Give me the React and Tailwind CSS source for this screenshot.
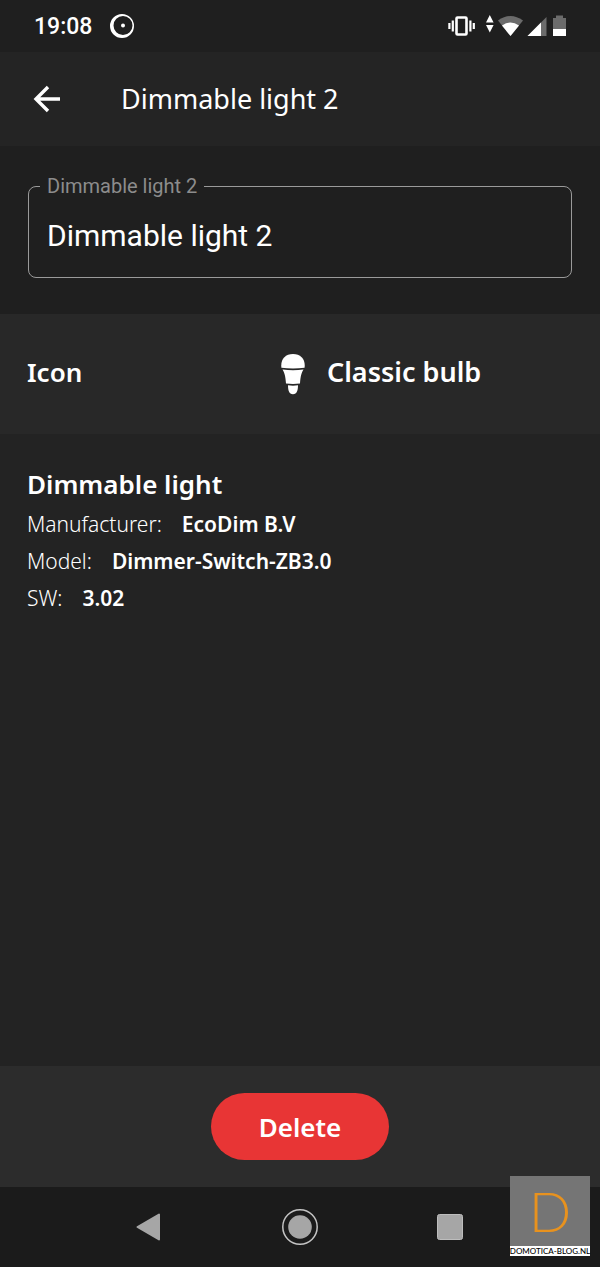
import React from 'react';

const details = [
  { label: 'Manufacturer:', value: 'EcoDim B.V' },
  { label: 'Model:', value: 'Dimmer-Switch-ZB3.0' },
  { label: 'SW:', value: '3.02' },
];

const StatusBar = () => (
  <div className="flex h-[52px] items-center justify-between bg-[#1f1f1f] pr-8 pl-[34px] font-['Roboto',sans-serif]">
    <div className="flex items-center gap-[18px]">
      <span className="pt-[2px] text-[23px] leading-8 font-medium">19:08</span>
      <svg className="size-6" viewBox="0 0 24 24">
        <path
          fill="#fff"
          fillRule="evenodd"
          d="M12 0a12 12 0 1 0 0 24a12 12 0 0 0 0-24ZM13 2a9.500 9.500 0 1 1 0 19a9.500 9.500 0 0 1 0-19Z"
        />
        <circle cx="13" cy="11.500" r="2" fill="#fff" />
      </svg>
    </div>

    <svg className="h-6 w-[120px]" viewBox="0 0 120 24">
      {/* Vibrate */}
      <rect x="8.500" y="3.500" width="10" height="17" rx="1" fill="none" stroke="#fff" strokeWidth="2.600" />
      <path d="M1.400 9v6M4.800 6.500v11M22.400 6.500v11M25.800 9v6" stroke="#fff" strokeWidth="2.200" />
      {/* Data traffic */}
      <path d="M41.800 1l3.800 7.500h-7.600zM41.800 18.500l-3.800-7.500h7.600z" fill="#fff" />
      {/* Wifi */}
      <path d="M50 6.500Q62.500-2.500 75 6.500L62.500 22Z" fill="#6b6b6b" />
      <path d="M54 11.500Q62.500 5.500 71 11.500L62.500 22Z" fill="#fff" />
      {/* Signal */}
      <path d="M79.500 22L98.500 3v19z" fill="#6b6b6b" />
      <path d="M79.500 22L93 8.500V22z" fill="#fff" />
      {/* Battery */}
      <path d="M105 4h3V1.500h7V4h3v11h-13z" fill="#6b6b6b" />
      <path d="M105 15h13v7h-13z" fill="#fff" />
    </svg>
  </div>
);

const BulbIcon = () => (
  <svg className="h-[42px] w-6" viewBox="0 0 24 42" fill="#fff">
    <path d="M.4 14.800C-.6 6.500 4 1 12 1s12.600 5.500 11.600 13.800Q12 16.400.4 14.800Z" />
    <path d="M1.500 16.600q10.500 1.400 21 0c-2 3-3 7-3.500 13.900q-7 .9-14 0c-.5-6.900-1.500-10.900-3.500-13.900Z" />
    <path d="M7 32.300q5 .7 10 0c0 5-1 8.900-5 8.900s-5-3.900-5-8.900Z" />
  </svg>
);

const NavBar = () => (
  <nav className="flex h-20 items-center justify-center gap-[114px] bg-[#1b1b1b]">
    <button type="button" aria-label="Back">
      <svg className="size-9" viewBox="0 0 36 36">
        <path d="M5.500 18L27 5.500v25z" fill="#a6a6a6" stroke="#a6a6a6" strokeWidth="2" strokeLinejoin="round" />
      </svg>
    </button>
    <button type="button" aria-label="Home">
      <svg className="size-9" viewBox="0 0 36 36">
        <circle cx="18" cy="18" r="17.200" fill="none" stroke="#c4c4c4" strokeWidth="1.500" />
        <circle cx="18" cy="18" r="11.800" fill="#a6a6a6" />
      </svg>
    </button>
    <button type="button" aria-label="Recent apps">
      <svg className="size-9" viewBox="0 0 36 36">
        <rect x="5.500" y="5.500" width="25" height="25" rx="2" fill="#a6a6a6" stroke="#bdbdbd" />
      </svg>
    </button>
  </nav>
);

const Watermark = () => (
  <div className="absolute right-[10px] bottom-[11px] flex w-20 flex-col font-['Lato',sans-serif]">
    <div className="flex h-[70px] items-center justify-center bg-[#757575]">
      <span className="text-[56px] leading-none font-light text-[#e8921e]">D</span>
    </div>
    <div className="flex h-[10px] items-center justify-center bg-white text-[8px] leading-none font-medium whitespace-nowrap text-black">
      DOMOTICA-BLOG.NL
    </div>
  </div>
);

export default function App() {
  return (
    <div className="relative flex min-h-screen flex-col bg-[#232323] font-['Noto_Sans',sans-serif] text-white">
      <StatusBar />

      <header className="flex h-[94px] items-center gap-[60px] bg-[#242424] pl-[33px]">
        <button type="button" aria-label="Go back">
          <svg className="size-7" viewBox="0 0 28 28" fill="none" stroke="#fff" strokeWidth="3.400">
            <path d="M27 14H3M15 2L3 14l12 12" />
          </svg>
        </button>
        <h1 className="text-[27px] leading-9">Dimmable light 2</h1>
      </header>

      <section className="bg-[#1f1f1f] px-7 pt-7 pb-9 font-['Roboto',sans-serif]">
        <fieldset className="rounded-lg border border-[#9a9a9a]">
          <legend className="ml-[11px] px-[7px] text-xl leading-6 text-[#8c8c8c]">
            <label htmlFor="light-name">Dimmable light 2</label>
          </legend>
          <input
            id="light-name"
            type="text"
            defaultValue="Dimmable light 2"
            className="mb-[5px] block h-[74px] w-full bg-transparent px-[18px] text-3xl outline-none"
          />
        </fieldset>
      </section>

      <section className="grid h-[120px] grid-cols-[1fr_319px] items-center bg-[#282828] pl-[27px] text-[27px] leading-9 font-semibold">
        <h2 className="pb-1 text-[26px]">Icon</h2>
        <button type="button" className="flex items-center gap-[22px] text-left">
          <BulbIcon />
          <span className="pb-1">Classic bulb</span>
        </button>
      </section>

      <section className="flex-1 px-[27px] pt-[30px]">
        <h2 className="text-[26px] leading-10 font-semibold">Dimmable light</h2>
        <dl className="pt-[2px] text-[21px] leading-[37px]">
          {details.map((item) => (
            <div key={item.label} className="flex gap-5">
              <dt className="font-light">{item.label}</dt>
              <dd className="font-semibold">{item.value}</dd>
            </div>
          ))}
        </dl>
      </section>

      <footer className="flex h-[121px] items-center justify-center bg-[#2c2c2c]">
        <button
          type="button"
          className="h-[67px] w-[178px] rounded-full bg-[#e83535] text-[26px] leading-9 font-semibold"
        >
          Delete
        </button>
      </footer>

      <NavBar />
      <Watermark />
    </div>
  );
}
